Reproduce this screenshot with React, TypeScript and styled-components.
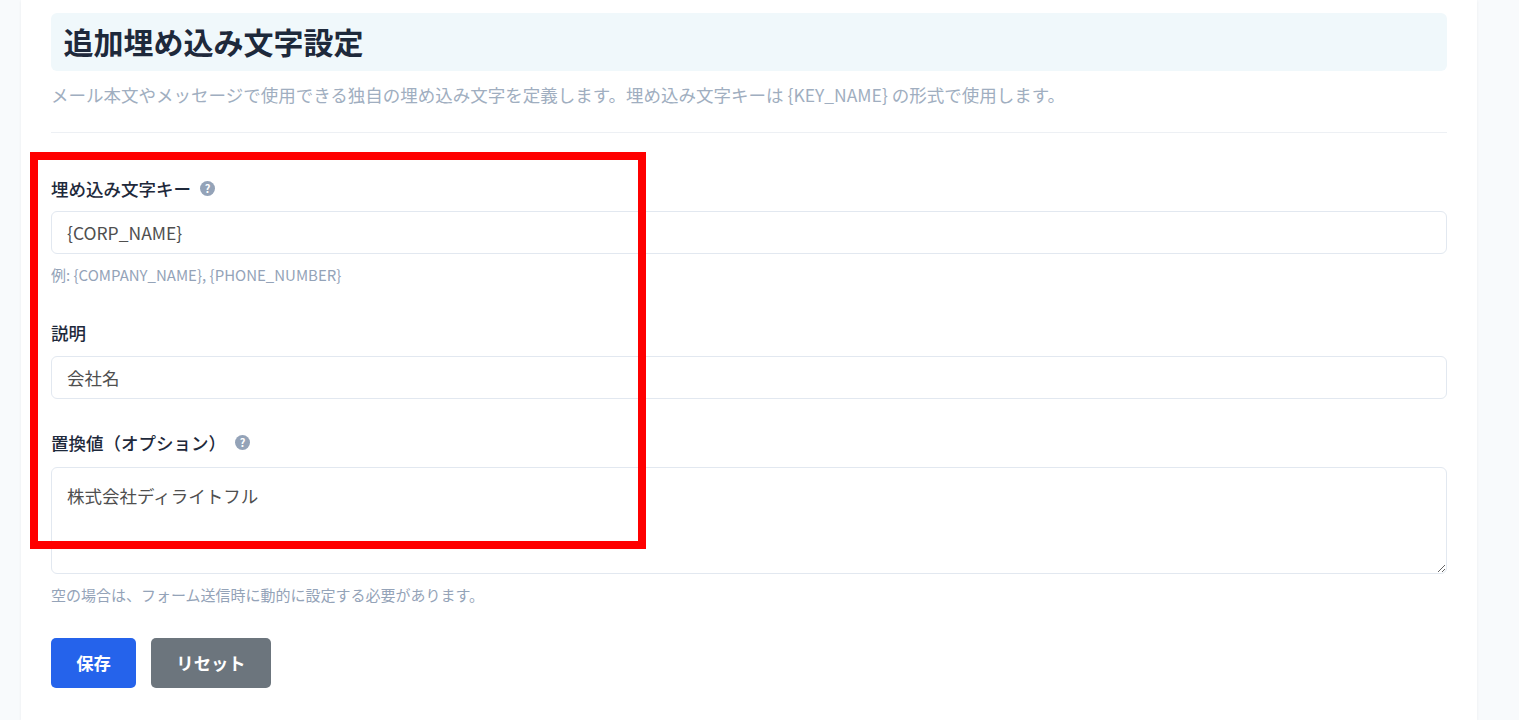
import styled, { createGlobalStyle } from 'styled-components';

const GlobalStyle = createGlobalStyle`
  html, body {
    margin: 0;
    height: 720px;
    overflow: hidden;
    background: #f8fafc;
    font-family: "Noto Sans CJK JP", "Noto Sans", sans-serif;
    font-size: 17.5px;
    color: #1e293b;
  }
  * {
    box-sizing: border-box;
  }
`;

const Page = styled.div`
  position: relative;
  height: 720px;
  padding: 0 42px 0 21px;
`;

const Card = styled.main`
  height: 720px;
  padding: 13px 30px 0;
  background: #ffffff;
  box-shadow: 0 1px 3px rgba(15, 23, 42, 0.06);
`;

const TitleBar = styled.div`
  height: 58px;
  display: flex;
  align-items: center;
  padding: 0 12.5px 2px;
  background: #f0f8fb;
  border-radius: 6px;
`;

const Title = styled.h1`
  margin: 0;
  font-size: 30px;
  font-weight: 700;
  line-height: 1;
  color: #1e293b;
`;

const Description = styled.p`
  margin: 11px 0 0;
  font-size: 17.5px;
  line-height: 25px;
  color: #a0aec0;
`;

const Divider = styled.hr`
  margin: 25px 0 0;
  border: 0;
  border-top: 1px solid #edf0f4;
`;

const Field = styled.div<{ $gap: number }>`
  margin-top: ${(p) => p.$gap}px;
`;

const Label = styled.label<{ $below: number }>`
  display: flex;
  align-items: center;
  gap: 9px;
  height: 24px;
  margin-bottom: ${(p) => p.$below}px;
  font-size: 17.5px;
  font-weight: 500;
  color: #1e293b;
`;

const HelpDot = styled.span`
  display: inline-flex;
  align-items: center;
  justify-content: center;
  width: 15px;
  height: 15px;
  border-radius: 50%;
  background: #94a3b8;
  color: #ffffff;
  font-size: 11px;
  font-weight: 700;
  line-height: 1;
`;

const TextInput = styled.input`
  display: block;
  width: 100%;
  height: 43px;
  padding: 0 15px;
  background: #ffffff;
  border: 1px solid #e2e8f0;
  border-radius: 6px;
  font: inherit;
  font-size: 17.5px;
  color: #4f4f4f;
  outline: none;
`;

const TextArea = styled.textarea`
  display: block;
  width: 100%;
  height: 107px;
  padding: 15px;
  background: #ffffff;
  border: 1px solid #e2e8f0;
  border-radius: 6px;
  font: inherit;
  font-size: 17.5px;
  line-height: 26px;
  color: #4f4f4f;
  outline: none;
`;

const Hint = styled.p`
  margin: 10px 0 0;
  font-size: 15px;
  line-height: 21px;
  color: #94a3b8;
`;

const Actions = styled.div`
  display: flex;
  gap: 15px;
  margin-top: 33px;
`;

const Button = styled.button<{ $bg: string; $width: number }>`
  width: ${(p) => p.$width}px;
  height: 50px;
  padding: 0 0 2px;
  border: 0;
  border-radius: 5px;
  background: ${(p) => p.$bg};
  color: #ffffff;
  font: inherit;
  font-size: 17.33px;
  font-weight: 700;
`;

const Highlight = styled.div`
  position: absolute;
  left: 30px;
  top: 152px;
  width: 616px;
  height: 397px;
  border: 8px solid #ff0000;
  pointer-events: none;
`;

export default function App() {
  return (
    <>
      <GlobalStyle />
      <Page>
        <Card>
          <TitleBar>
            <Title>追加埋め込み文字設定</Title>
          </TitleBar>
          <Description>
            メール本文やメッセージで使用できる独自の埋め込み文字を定義します。埋め込み文字キーは {'{KEY_NAME}'} の形式で使用します。
          </Description>
          <Divider />
          <Field $gap={43}>
            <Label $below={11}>
              埋め込み文字キー
              <HelpDot>?</HelpDot>
            </Label>
            <TextInput defaultValue="{CORP_NAME}" />
            <Hint>例: {'{COMPANY_NAME}'}, {'{PHONE_NUMBER}'}</Hint>
          </Field>
          <Field $gap={35}>
            <Label $below={12}>説明</Label>
            <TextInput defaultValue="会社名" />
          </Field>
          <Field $gap={31}>
            <Label $below={13}>
              置換値（オプション）
              <HelpDot>?</HelpDot>
            </Label>
            <TextArea defaultValue="株式会社ディライトフル" />
            <Hint>空の場合は、フォーム送信時に動的に設定する必要があります。</Hint>
          </Field>
          <Actions>
            <Button $bg="#2563eb" $width={85}>保存</Button>
            <Button $bg="#6c757d" $width={120}>リセット</Button>
          </Actions>
        </Card>
        <Highlight />
      </Page>
    </>
  );
}
